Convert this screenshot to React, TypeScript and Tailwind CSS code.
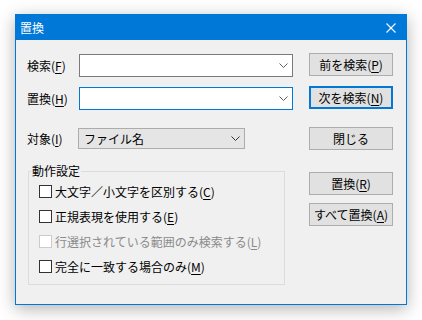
import React from 'react';

const K = ({ c }: { c: string }) => <span className="underline underline-offset-2">{c}</span>;

const Chevron = ({ color = '#606060' }: { color?: string }) => (
  <svg width="9" height="5" viewBox="0 0 9 5" className="shrink-0">
    <polyline points="0.5,0.5 4.5,4.5 8.5,0.5" fill="none" stroke={color} strokeWidth="1" />
  </svg>
);

const Combo = ({ focused }: { focused?: boolean }) => (
  <div
    className={`w-[214px] h-[23px] bg-white border flex items-center justify-end pr-[4px] ${
      focused ? 'border-[#0078d7]' : 'border-[#7a7a7a]'
    }`}
  >
    <Chevron />
  </div>
);

const Button = ({ children, primary }: { children: React.ReactNode; primary?: boolean }) => (
  <button
    className={`w-[84px] h-[23px] bg-[#e1e1e1] flex items-center justify-center text-black ${
      primary ? 'border-2 border-[#0078d7]' : 'border border-[#adadad]'
    }`}
  >
    {children}
  </button>
);

const Check = ({ children, disabled }: { children: React.ReactNode; disabled?: boolean }) => (
  <div className={`h-[25px] flex items-center gap-[3px] ${disabled ? 'text-[#8a8a8a]' : 'text-black'}`}>
    <span
      className={`w-[13px] h-[13px] border bg-white shrink-0 ${
        disabled ? 'border-[#cccccc]' : 'border-[#333333]'
      }`}
    />
    <span>{children}</span>
  </div>
);

export default function App() {
  return (
    <div className="w-[422px] h-[320px] bg-white pt-[14px] pl-[15px] font-['Noto_Sans_CJK_JP','Meiryo_UI',sans-serif] text-[12px] leading-[16px]">
      <div className="w-[392px] h-[291px] border border-[#0078d7] bg-[#f0f0f0] flex flex-col shadow-[0_4px_16px_rgba(0,0,0,0.3)]">
        {/* Title bar */}
        <div className="h-[25px] bg-[#0078d7] flex items-center justify-between pl-[4px] pr-[10px] text-white">
          <span className="text-[12px]">置換</span>
          <svg width="10" height="10" viewBox="0 0 10 10">
            <line x1="0.5" y1="0.5" x2="9.5" y2="9.5" stroke="white" strokeWidth="1.1" />
            <line x1="9.5" y1="0.5" x2="0.5" y2="9.5" stroke="white" strokeWidth="1.1" />
          </svg>
        </div>

        {/* Body */}
        <div className="flex pl-[11px] pt-[13px] gap-[16px]">
          <div className="w-[266px] flex flex-col">
            <div className="mt-[1px] flex items-center">
              <span className="w-[52px]">検索(<K c="F" />)</span>
              <Combo />
            </div>
            <div className="mt-[10px] flex items-center">
              <span className="w-[52px]">置換(<K c="H" />)</span>
              <Combo focused />
            </div>
            <div className="mt-[18px] flex items-center">
              <span className="w-[51px]">対象(<K c="I" />)</span>
              <div className="w-[167px] h-[21px] bg-[#e5e5e5] border border-[#acacac] flex items-center justify-between pl-[5px] pr-[4px]">
                <span>ファイル名</span>
                <Chevron color="#333333" />
              </div>
            </div>

            <fieldset className="mt-[14px] ml-[1px] w-[257px] border border-[#dcdcdc] px-0 pb-[5px]">
              <legend className="ml-[2px] px-[1px] leading-[16px]">動作設定</legend>
              <div className="pl-[10px] flex flex-col">
                <Check>大文字／小文字を区別する(<K c="C" />)</Check>
                <Check>正規表現を使用する(<K c="E" />)</Check>
                <Check disabled>行選択されている範囲のみ検索する(<K c="L" />)</Check>
                <Check>完全に一致する場合のみ(<K c="M" />)</Check>
              </div>
            </fieldset>
          </div>

          <div className="flex flex-col">
            <Button>前を検索(<K c="P" />)</Button>
            <div className="mt-[10px]">
              <Button primary>次を検索(<K c="N" />)</Button>
            </div>
            <div className="mt-[18px]">
              <Button>閉じる</Button>
            </div>
            <div className="mt-[22px]">
              <Button>置換(<K c="R" />)</Button>
            </div>
            <div className="mt-[8px]">
              <Button>すべて置換(<K c="A" />)</Button>
            </div>
          </div>
        </div>
      </div>
    </div>
  );
}
